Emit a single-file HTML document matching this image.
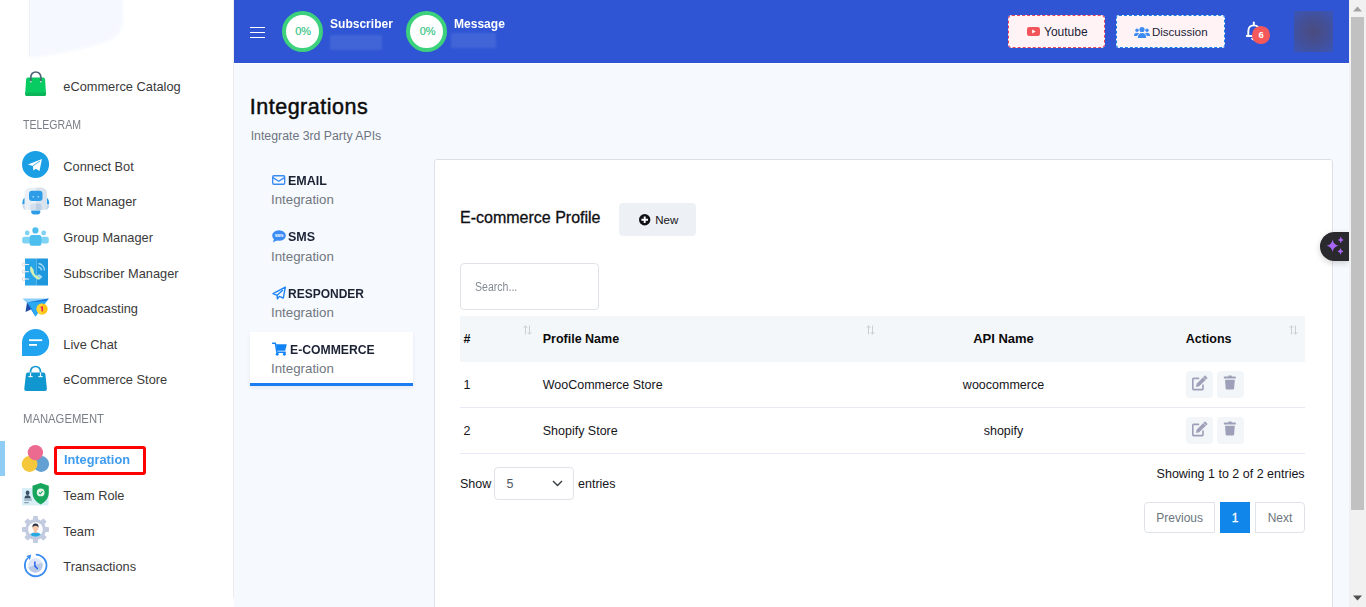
<!DOCTYPE html>
<html><head><meta charset="utf-8"><style>
html,body{margin:0;padding:0;width:1366px;height:607px;overflow:hidden;background:#fff;}
body{position:relative;font-family:"Liberation Sans",sans-serif;}
.a{position:absolute;}
.t{position:absolute;white-space:nowrap;}
svg.a{overflow:visible;}
</style></head><body>
<div class="a" style="left:0px;top:0px;width:233px;height:607px;background:#fff;"></div>
<div class="a" style="left:233px;top:0px;width:1px;height:598px;background:#ececec;"></div>
<svg class="a" style="left:0;top:0" width="140" height="70" viewBox="0 0 140 70"><defs><filter id="bl"><feGaussianBlur stdDeviation="1.6"/></filter></defs><path d="M29 -5 H123 V20 Q123 35 106 42 Q82 50 57 54 Q42 57 29 58 Z" fill="#f5f8fe" filter="url(#bl)"/></svg>
<div class="a" style="left:29px;top:0px;width:1px;height:56px;background:#efeff3;"></div>
<div class="t" style="left:63.3px;top:81.00px;font-size:12.8px;line-height:12.8px;color:#3a3a3a;font-weight:normal;">eCommerce Catalog</div>
<div class="t" style="left:63.3px;top:161.00px;font-size:12.8px;line-height:12.8px;color:#3a3a3a;font-weight:normal;">Connect Bot</div>
<div class="t" style="left:63.3px;top:196.00px;font-size:12.8px;line-height:12.8px;color:#3a3a3a;font-weight:normal;">Bot Manager</div>
<div class="t" style="left:63.3px;top:232.00px;font-size:12.8px;line-height:12.8px;color:#3a3a3a;font-weight:normal;">Group Manager</div>
<div class="t" style="left:63.3px;top:268.00px;font-size:12.8px;line-height:12.8px;color:#3a3a3a;font-weight:normal;">Subscriber Manager</div>
<div class="t" style="left:63.3px;top:303.00px;font-size:12.8px;line-height:12.8px;color:#3a3a3a;font-weight:normal;">Broadcasting</div>
<div class="t" style="left:63.3px;top:339.00px;font-size:12.8px;line-height:12.8px;color:#3a3a3a;font-weight:normal;">Live Chat</div>
<div class="t" style="left:63.3px;top:374.00px;font-size:12.8px;line-height:12.8px;color:#3a3a3a;font-weight:normal;">eCommerce Store</div>
<div class="t" style="left:63.3px;top:490.00px;font-size:12.8px;line-height:12.8px;color:#3a3a3a;font-weight:normal;">Team Role</div>
<div class="t" style="left:63.3px;top:526.00px;font-size:12.8px;line-height:12.8px;color:#3a3a3a;font-weight:normal;">Team</div>
<div class="t" style="left:63.3px;top:561.00px;font-size:12.8px;line-height:12.8px;color:#3a3a3a;font-weight:normal;">Transactions</div>
<div class="t" style="left:23px;top:119.00px;font-size:12.2px;line-height:12.2px;color:#7a7f87;font-weight:normal;transform:scaleX(0.865);transform-origin:0 0;">TELEGRAM</div>
<div class="t" style="left:23px;top:413.00px;font-size:12.7px;line-height:12.7px;color:#7a7f87;font-weight:normal;transform:scaleX(0.89);transform-origin:0 0;">MANAGEMENT</div>
<div class="a" style="left:0px;top:441px;width:5px;height:35px;background:#90cdf4;"></div>
<div class="t" style="left:63.5px;top:453.00px;font-size:13.6px;line-height:13.6px;color:#3d9bf0;font-weight:bold;transform:scaleX(0.94);transform-origin:0 0;">Integration</div>
<div class="a" style="left:54px;top:446px;width:92px;height:29px;box-sizing:border-box;border:3.8px solid #ff0000;border-radius:3px;"></div>
<svg class="a" style="left:22px;top:69px" width="28" height="28" viewBox="0 0 28 28">
<path d="M8.8 13 V8 A5 5 0 0 1 18.8 8 V13" fill="none" stroke="#4f6377" stroke-width="1.7"/>
<path d="M6 8.6 Q4.2 8.6 4.1 10.5 L3.2 24.5 Q3.1 27.1 5.5 27.1 H21.7 Q24.1 27.1 24 24.5 L23.1 10.5 Q23 8.6 21.2 8.6 Z" fill="#08cb62"/>
<path d="M3.4 23.5 H23.9 L24 24.5 Q24.1 27.1 21.7 27.1 H5.5 Q3.1 27.1 3.2 24.5 Z" fill="#0bb559"/>
<path d="M8.8 8.6 V13 M18.8 8.6 V13" stroke="#4f6377" stroke-width="1.7"/>
<rect x="8" y="12" width="1.6" height="1.4" fill="#b9e9c9"/><rect x="18" y="12" width="1.6" height="1.4" fill="#b9e9c9"/></svg>
<svg class="a" style="left:22px;top:151px" width="27" height="27" viewBox="0 0 27 27">
<circle cx="13.55" cy="13.4" r="13.5" fill="#1a9fe5"/>
<path d="M19.9 7.9 L5.9 13.6 L10.9 14.9 L11.4 19.6 L13.8 17.8 L17.5 20.1 Z" fill="#fff"/>
<path d="M10.9 14.9 L18 10" stroke="#1a9fe5" stroke-width="0.8"/></svg>
<svg class="a" style="left:22px;top:186.5px" width="28" height="28" viewBox="0 0 28 28">
<path d="M0.3 17 Q0.3 10.5 4 10.5 V17 Z" fill="#2d9be6"/><path d="M0.3 17 Q0.3 22.8 4 22.8 V17 Z" fill="#cddbe9"/>
<path d="M27.2 17 Q27.2 10.5 23.5 10.5 V17 Z" fill="#2d9be6"/><path d="M27.2 17 Q27.2 22.8 23.5 22.8 V17 Z" fill="#c4d4e6"/>
<path d="M13.8 0.5 H9 Q2.5 0.5 2.5 7 V19 Q2.5 23 6.5 23 H13.8 Z" fill="#eaf0f7"/>
<path d="M13.8 0.5 H18.5 Q25 0.5 25 7 V19 Q25 23 21 23 H13.8 Z" fill="#d8e3ee"/>
<rect x="7" y="3.8" width="13.5" height="10.2" rx="3" fill="#2e9de8"/>
<path d="M10.2 10.2 Q11.2 8.3 12.2 10.2 Z M15.3 10.2 Q16.3 8.3 17.3 10.2 Z" fill="#fff"/>
<path d="M13.8 16.5 H11 Q8 16.5 8 19.5 V23 H13.8 Z" fill="#d4e0ed"/><path d="M13.8 16.5 H16.5 Q19.5 16.5 19.5 19.5 V23 H13.8 Z" fill="#bccfe5"/>
<path d="M9.2 23.5 H18.3 V25 Q18.3 27.6 13.8 27.6 Q9.2 27.6 9.2 25Z" fill="#2e9de8"/></svg>
<svg class="a" style="left:22px;top:227px" width="27" height="20" viewBox="0 0 27 20">
<circle cx="5.2" cy="6" r="2.4" fill="#7fd3f2"/><circle cx="21.7" cy="6" r="2.4" fill="#7fd3f2"/>
<rect x="0.2" y="9.8" width="8" height="6.7" rx="2" fill="#7fd3f2"/><rect x="19" y="9.8" width="7.8" height="6.7" rx="2" fill="#7fd3f2"/>
<circle cx="13.4" cy="3.4" r="3.1" fill="#4cbfee"/>
<rect x="7.5" y="8.1" width="12" height="10.7" rx="2.5" fill="#4cbfee"/></svg>
<svg class="a" style="left:22px;top:257.5px" width="27" height="28" viewBox="0 0 27 28">
<rect x="3" y="0.5" width="11.6" height="27" fill="#29a4e9"/><rect x="14.6" y="0.5" width="11.4" height="27" fill="#1e97dd"/>
<g fill="none" stroke="#d3d9df" stroke-width="1"><circle cx="1.8" cy="6.4" r="1.5"/><circle cx="1.8" cy="13.7" r="1.5"/><circle cx="1.8" cy="21" r="1.5"/></g>
<g fill="#e3ecf3"><rect x="2.5" y="6" width="4.5" height="1"/><rect x="2.5" y="13.2" width="4.5" height="1"/><rect x="2.5" y="20.5" width="4.5" height="1"/></g>
<path d="M9.3 8.2 Q7 9.5 8.6 14 Q10.8 18.8 15 21.2 Q17.3 22.2 18.6 20.8 L15.2 17.5 Q13.6 17.9 12.6 16 Q11.4 13.9 11.8 12.3 Z" fill="#d4efb4"/>
<path d="M15.2 17.5 L18.6 20.8 Q20.8 19.5 19.8 18.2 Q18.5 16.8 16.8 16.2 Z" fill="#a6dbf8"/>
<path d="M16.5 5.5 A7 7 0 0 1 22.5 12.5 M16.2 8.8 A4 4 0 0 1 19.6 12.4" fill="none" stroke="#a6dbf8" stroke-width="1.3"/></svg>
<svg class="a" style="left:22px;top:297.5px" width="27" height="20" viewBox="0 0 27 20">
<path d="M0.5 0.6 L26.8 0.6 L5 5 Z" fill="#8cd0fb"/>
<path d="M5 4.6 L26.8 0.6 L13.5 18.8 Z" fill="#2ba8f2"/>
<path d="M5 4.6 L26.8 0.6 L24.5 3 Z" fill="#1a73d6"/>
<path d="M5 4.6 L3.5 14 L9.8 11 Z" fill="#1c4aa6"/>
<path d="M5 4.6 L9.8 11 L13.5 18.8 Z" fill="#1e8ae8"/>
<circle cx="20.1" cy="11" r="5.6" fill="#fbc417"/><path d="M20.1 5.4 A5.6 5.6 0 0 0 20.1 16.6Z" fill="#ffd437"/>
<rect x="19.4" y="8.6" width="1.6" height="4.8" fill="#e61f5a"/><rect x="18.6" y="8.6" width="1.6" height="1.2" fill="#e61f5a"/></svg>
<svg class="a" style="left:22px;top:329px" width="27" height="27" viewBox="0 0 27 27">
<path d="M13.6 0 A13.6 13.5 0 1 1 13.6 27 H0 V13.5 A13.6 13.5 0 0 1 13.6 0 Z" fill="#20a4ef"/>
<rect x="7" y="10.3" width="13.2" height="1.8" fill="#fff"/><rect x="7" y="15" width="8" height="1.8" fill="#fff"/></svg>
<svg class="a" style="left:22px;top:364px" width="28" height="28" viewBox="0 0 28 28">
<path d="M8.5 9 V7.5 A5 5 0 0 1 18.5 7.5 V9" fill="none" stroke="#1097cf" stroke-width="1.7"/>
<path d="M6 8.4 Q4.1 8.4 3.9 10.5 L2.3 24.4 Q2.1 26.9 4.6 26.9 H22.6 Q25.1 26.9 24.9 24.4 L23.4 10.5 Q23.2 8.4 21.3 8.4 Z" fill="#1097cf"/>
<g fill="#eaf5fb"><rect x="7.9" y="8.4" width="1.2" height="4"/><rect x="17.9" y="8.4" width="1.2" height="4"/><rect x="6.4" y="12" width="4.2" height="1.2"/><rect x="16.4" y="12" width="4.2" height="1.2"/></g></svg>
<svg class="a" style="left:21px;top:444px" width="29" height="29" viewBox="0 0 29 29">
<circle cx="20.2" cy="20" r="7.9" fill="#62a0d4"/><circle cx="8.6" cy="20" r="7.9" fill="#f5c73a"/><circle cx="14.4" cy="8.6" r="7.7" fill="#ec6a8f"/></svg>
<svg class="a" style="left:22px;top:483px" width="27" height="23" viewBox="0 0 27 23">
<rect x="0" y="5" width="26.5" height="17.5" rx="1" fill="#d9eff8"/>
<ellipse cx="5.6" cy="9.8" rx="1.9" ry="2.4" fill="#3d5266"/><path d="M2.4 15.6 Q2.6 12.3 5.6 12.3 Q8.6 12.3 8.8 15.6 Z" fill="#3d5266"/><rect x="2.2" y="15.6" width="7.6" height="2.4" fill="#aabdcc"/><rect x="2.2" y="19.3" width="4.5" height="0.9" fill="#6c7f92"/>
<path d="M18.7 0 L26.8 2.8 V10 Q26.8 17.2 18.7 21.5 Q10.5 17.2 10.5 10 V2.8 Z" fill="#17a65b"/>
<circle cx="18.7" cy="9.4" r="3.9" fill="#e6f6ec"/><path d="M16.9 9.5 L18.3 10.8 L20.6 8.2" fill="none" stroke="#17a65b" stroke-width="1.1"/></svg>
<svg class="a" style="left:22px;top:516px" width="27" height="27" viewBox="0 0 27 27">
<g fill="#c3cbe0"><circle cx="13.5" cy="13.5" r="10.5"/>
<rect x="11" y="0" width="5" height="27" rx="1"/><rect x="11" y="0" width="5" height="27" rx="1" transform="rotate(45 13.5 13.5)"/><rect x="11" y="0" width="5" height="27" rx="1" transform="rotate(90 13.5 13.5)"/><rect x="11" y="0" width="5" height="27" rx="1" transform="rotate(135 13.5 13.5)"/></g>
<circle cx="13.5" cy="13.5" r="7.3" fill="#fff"/>
<defs><clipPath id="tc"><circle cx="13.5" cy="13.5" r="7.3"/></clipPath></defs>
<g clip-path="url(#tc)"><path d="M7 22 Q7 16.5 13.5 16.5 Q20 16.5 20 22 Z" fill="#29a9e1"/><rect x="12.3" y="14" width="2.4" height="3" fill="#f2b89a"/>
<ellipse cx="13.5" cy="11.8" rx="2.9" ry="3.3" fill="#f6c7a8"/><path d="M10.4 11.5 Q10.2 7.5 13.5 7.6 Q16.8 7.5 16.6 11.5 Q15.5 9.6 13.5 9.8 Q11.5 9.6 10.4 11.5Z" fill="#2c3345"/></g></svg>
<svg class="a" style="left:22px;top:552px" width="27" height="27" viewBox="0 0 27 27">
<path d="M13.8 2.6 A10.8 10.8 0 1 1 5.8 6.0" fill="none" stroke="#3a8cf2" stroke-width="1.8"/>
<path d="M9.2 2.6 L4.4 3.9 L8.0 8.0 Z" fill="#3a8cf2"/>
<defs><clipPath id="trc"><circle cx="13.4" cy="13.4" r="7.3"/></clipPath></defs>
<circle cx="13.4" cy="13.4" r="7.3" fill="#dfe6f7"/>
<path d="M0 17.5 L27 8.5 V27 H0 Z" fill="#b9c9e6" clip-path="url(#trc)"/>
<path d="M12.9 10 V14.1 L15.3 16.6" fill="none" stroke="#2563eb" stroke-width="1.5" stroke-linecap="round"/></svg>
<div class="a" style="left:234px;top:0px;width:1115px;height:63px;background:#2f55d4;"></div>
<div class="a" style="left:234px;top:63px;width:1115px;height:1px;background:#ffffff;"></div>
<div class="a" style="left:250px;top:26.5px;width:15px;height:1.6px;background:#fff;"></div>
<div class="a" style="left:250px;top:31.5px;width:15px;height:1.6px;background:#fff;"></div>
<div class="a" style="left:250px;top:36.5px;width:15px;height:1.6px;background:#fff;"></div>
<div class="a" style="left:281.5px;top:10.8px;width:41px;height:41px;box-sizing:border-box;border:4px solid #3dd17e;border-radius:50%;background:#fff;"></div>
<div class="t" style="left:153.2px;width:300px;text-align:center;top:26.00px;font-size:11px;line-height:11px;color:#2ec27e;font-weight:normal;-webkit-text-stroke:0.15px #2ec27e;">0%</div>
<div class="a" style="left:406.0px;top:10.8px;width:41px;height:41px;box-sizing:border-box;border:4px solid #3dd17e;border-radius:50%;background:#fff;"></div>
<div class="t" style="left:277.7px;width:300px;text-align:center;top:26.00px;font-size:11px;line-height:11px;color:#2ec27e;font-weight:normal;-webkit-text-stroke:0.15px #2ec27e;">0%</div>
<div class="t" style="left:329.8px;top:17.00px;font-size:13.3px;line-height:13.3px;color:#fff;font-weight:bold;transform:scaleX(0.905);transform-origin:0 0;">Subscriber</div>
<div class="t" style="left:453.8px;top:17.00px;font-size:13.3px;line-height:13.3px;color:#fff;font-weight:bold;transform:scaleX(0.905);transform-origin:0 0;">Message</div>
<div class="a" style="left:330px;top:35px;width:52px;height:15px;background:rgba(255,255,255,0.09);filter:blur(1px);"></div>
<div class="a" style="left:451px;top:33px;width:45px;height:15px;background:rgba(255,255,255,0.09);filter:blur(1px);"></div>
<div class="a" style="left:1008px;top:15px;width:97px;height:33px;border-radius:4px;background:#fff;"><div style="position:absolute;left:0;top:0;width:97px;height:33px;box-sizing:border-box;border:1.5px dashed #e8465a;border-radius:4px;background:#fff3f6;background-clip:padding-box;"></div></div>
<svg class="a" style="left:1026.7px;top:27px" width="13" height="9" viewBox="0 0 13 9"><rect width="13" height="9" rx="2.3" fill="#f2545b"/><path d="M5.2 2.5 L8.6 4.5 L5.2 6.5Z" fill="#fff"/></svg>
<div class="t" style="left:1044px;top:26.00px;font-size:12px;line-height:12px;color:#1b2234;font-weight:normal;">Youtube</div>
<div class="a" style="left:1116px;top:15px;width:109px;height:33px;border-radius:3px;background:#fff;"><div style="position:absolute;left:0;top:0;width:109px;height:33px;box-sizing:border-box;border:1.5px dashed #1a80e8;border-radius:3px;background:#fff3f6;background-clip:padding-box;"></div></div>
<svg class="a" style="left:1133.5px;top:25.5px" width="16" height="12" viewBox="0 0 16 12"><circle cx="8" cy="3.5" r="2.6" fill="#3b8bf2"/><circle cx="3" cy="4.3" r="1.7" fill="#3b8bf2"/><circle cx="13" cy="4.3" r="1.7" fill="#3b8bf2"/>
<path d="M3.8 12 Q3.8 7 8 7 Q12.2 7 12.2 12Z" fill="#3b8bf2"/><path d="M0 10 Q0 6.8 3 6.8 Q4.5 6.8 5 7.5 Q3.3 8.5 3.2 10Z" fill="#3b8bf2"/><path d="M16 10 Q16 6.8 13 6.8 Q11.5 6.8 11 7.5 Q12.7 8.5 12.8 10Z" fill="#3b8bf2"/></svg>
<div class="t" style="left:1152px;top:27.00px;font-size:11.5px;line-height:11.5px;color:#1b2234;font-weight:normal;">Discussion</div>
<svg class="a" style="left:1244px;top:21px" width="18" height="20" viewBox="0 0 18 20"><path d="M9.8 1.6 V3.8" stroke="#fff" stroke-width="2" stroke-linecap="round"/><path d="M4.3 14.4 V10.2 Q4.3 4.4 9.8 4.4 Q15.3 4.4 15.3 10.2 V14.4 L16.8 15 H2.8 Z" fill="none" stroke="#fff" stroke-width="1.9" stroke-linejoin="round"/><path d="M7.6 17.2 Q9.8 19.8 12 17.2" fill="none" stroke="#fff" stroke-width="1.8"/></svg>
<div class="a" style="left:1252.2px;top:26px;width:17.6px;height:17.6px;border-radius:50%;background:#f4585a;"></div>
<div class="t" style="left:1111.2px;width:300px;text-align:center;top:30.00px;font-size:9.5px;line-height:9.5px;color:#fff;font-weight:bold;">6</div>
<div class="a" style="left:1294px;top:11px;width:39px;height:41px;background:radial-gradient(circle at 50% 50%, #4a4c7e 0%, #454f92 40%, #3b55b6 100%);"></div>
<div class="a" style="left:234px;top:64px;width:1115px;height:543px;background:#f6f9fe;"></div>
<div class="t" style="left:249.8px;top:97.00px;font-size:21.5px;line-height:21.5px;color:#0b0b0b;font-weight:normal;-webkit-text-stroke:0.45px #0b0b0b;letter-spacing:0.5px;">Integrations</div>
<div class="t" style="left:250.7px;top:130.00px;font-size:12.3px;line-height:12.3px;color:#6e7580;font-weight:normal;">Integrate 3rd Party APIs</div>
<div class="a" style="left:250px;top:332px;width:163px;height:54px;background:#fff;box-shadow:0 2px 4px rgba(20,40,80,0.07);"></div>
<div class="a" style="left:250px;top:383.4px;width:163px;height:2.4px;background:#1a7cf0;"></div>
<div class="t" style="left:288.4px;top:174.00px;font-size:13.3px;line-height:13.3px;color:#1b2234;font-weight:bold;transform:scaleX(0.94);transform-origin:0 0;">EMAIL</div>
<div class="t" style="left:271px;top:193.00px;font-size:13.3px;line-height:13.3px;color:#72777f;font-weight:normal;">Integration</div>
<div class="t" style="left:288.4px;top:230.00px;font-size:13.3px;line-height:13.3px;color:#1b2234;font-weight:bold;transform:scaleX(0.94);transform-origin:0 0;">SMS</div>
<div class="t" style="left:271px;top:250.00px;font-size:13.3px;line-height:13.3px;color:#72777f;font-weight:normal;">Integration</div>
<div class="t" style="left:288.1px;top:287.00px;font-size:13.3px;line-height:13.3px;color:#1b2234;font-weight:bold;transform:scaleX(0.902);transform-origin:0 0;">RESPONDER</div>
<div class="t" style="left:271px;top:306.00px;font-size:13.3px;line-height:13.3px;color:#72777f;font-weight:normal;">Integration</div>
<div class="t" style="left:289.7px;top:343.00px;font-size:13.3px;line-height:13.3px;color:#1b2234;font-weight:bold;transform:scaleX(0.917);transform-origin:0 0;">E-COMMERCE</div>
<div class="t" style="left:271px;top:362.00px;font-size:13.3px;line-height:13.3px;color:#72777f;font-weight:normal;">Integration</div>
<svg class="a" style="left:271.8px;top:174.9px" width="13.4" height="10" viewBox="0 0 13.4 10"><rect x=".7" y=".7" width="12" height="8.6" rx="1.2" fill="none" stroke="#3b8bf5" stroke-width="1.35"/><path d="M1 2.6 L6.7 6.2 L12.4 2.6" fill="none" stroke="#3b8bf5" stroke-width="1.35"/></svg>
<svg class="a" style="left:271.5px;top:229.5px" width="14" height="13" viewBox="0 0 14 13"><ellipse cx="7" cy="5.5" rx="6.8" ry="5.3" fill="#3b8bf5"/><path d="M2 8.5 L1 12.5 L5.5 10Z" fill="#3b8bf5"/><text x="7" y="7.1" font-size="4" font-family="Liberation Sans" font-weight="bold" fill="#fff" text-anchor="middle">SMS</text></svg>
<svg class="a" style="left:271.5px;top:286px" width="15" height="15" viewBox="0 0 15 15"><path d="M13.3 1.1 L1 7.6 L5.1 9.3 L5.4 12.9 L7.4 10.4 L11.3 12.1 Z" fill="none" stroke="#1a82f7" stroke-width="1.35" stroke-linejoin="round"/><path d="M5.1 9.3 L11 4" stroke="#1a82f7" stroke-width="1.35"/></svg>
<svg class="a" style="left:272px;top:342px" width="16" height="15" viewBox="0 0 16 15"><path d="M0.6 1.3 H3.4 L4.8 10.2 H13.3" fill="none" stroke="#1283f5" stroke-width="1.4" stroke-linecap="round" stroke-linejoin="round"/><path d="M4 2.2 H14.8 L13.2 8.8 H4.9 Z" fill="#1283f5"/><circle cx="5.2" cy="12.2" r="1.45" fill="#1283f5"/><circle cx="12.4" cy="12.2" r="1.45" fill="#1283f5"/></svg>
<div class="a" style="left:434px;top:159px;width:899px;height:460px;box-sizing:border-box;border:1px solid #dde1e7;border-radius:3px;background:#fff;"></div>
<div class="t" style="left:460px;top:210.00px;font-size:16px;line-height:16px;color:#0f0f14;font-weight:normal;-webkit-text-stroke:0.3px #0f0f14;">E-commerce Profile</div>
<div class="a" style="left:619px;top:203px;width:77px;height:32.5px;border-radius:4px;background:#edf0f4;"></div>
<svg class="a" style="left:638.6px;top:213.6px" width="11.4" height="11.4" viewBox="0 0 11.4 11.4"><circle cx="5.7" cy="5.7" r="5.7" fill="#111116"/><path d="M5.7 2.4 V9 M2.4 5.7 H9" stroke="#fff" stroke-width="1.9"/></svg>
<div class="t" style="left:655.3px;top:215.00px;font-size:11.5px;line-height:11.5px;color:#15151a;font-weight:normal;">New</div>
<div class="a" style="left:460px;top:263px;width:139px;height:47px;box-sizing:border-box;border:1px solid #dfe3e8;border-radius:4px;background:#fff;"></div>
<div class="t" style="left:474.6px;top:281.00px;font-size:12px;line-height:12px;color:#858b94;font-weight:normal;transform:scaleX(0.88);transform-origin:0 0;">Search...</div>
<div class="a" style="left:460px;top:316px;width:845px;height:45.5px;background:#f4f7fa;"></div>
<div class="a" style="left:460px;top:407px;width:845px;height:1px;background:#e7e9f6;"></div>
<div class="a" style="left:460px;top:453px;width:845px;height:1px;background:#e7e9f6;"></div>
<div class="t" style="left:463.5px;top:333.00px;font-size:12.5px;line-height:12.5px;color:#0b0b0b;font-weight:bold;">#</div>
<div class="t" style="left:542.7px;top:333.00px;font-size:12.5px;line-height:12.5px;color:#0b0b0b;font-weight:bold;">Profile Name</div>
<div class="t" style="left:853.5px;width:300px;text-align:center;top:332.00px;font-size:13px;line-height:13px;color:#0b0b0b;font-weight:bold;">API Name</div>
<div class="t" style="left:1185.7px;top:333.00px;font-size:12.5px;line-height:12.5px;color:#0b0b0b;font-weight:bold;">Actions</div>
<svg class="a" style="left:523px;top:325px" width="9" height="10" viewBox="0 0 9 10"><path d="M2.5 9.5 V.8 M.6 2.8 L2.5 .8 L4.4 2.8 M6.5 .5 V9.2 M4.6 7.2 L6.5 9.2 L8.4 7.2" fill="none" stroke="#c5c9d0" stroke-width=".9"/></svg>
<svg class="a" style="left:866px;top:325px" width="9" height="10" viewBox="0 0 9 10"><path d="M2.5 9.5 V.8 M.6 2.8 L2.5 .8 L4.4 2.8 M6.5 .5 V9.2 M4.6 7.2 L6.5 9.2 L8.4 7.2" fill="none" stroke="#c5c9d0" stroke-width=".9"/></svg>
<svg class="a" style="left:1289px;top:325px" width="9" height="10" viewBox="0 0 9 10"><path d="M2.5 9.5 V.8 M.6 2.8 L2.5 .8 L4.4 2.8 M6.5 .5 V9.2 M4.6 7.2 L6.5 9.2 L8.4 7.2" fill="none" stroke="#c5c9d0" stroke-width=".9"/></svg>
<div class="t" style="left:463.5px;top:379.00px;font-size:12.5px;line-height:12.5px;color:#15151a;font-weight:normal;">1</div>
<div class="t" style="left:542.7px;top:379.00px;font-size:12.5px;line-height:12.5px;color:#15151a;font-weight:normal;">WooCommerce Store</div>
<div class="t" style="left:853.5px;width:300px;text-align:center;top:379.00px;font-size:12.5px;line-height:12.5px;color:#15151a;font-weight:normal;">woocommerce</div>
<div class="a" style="left:1186.3px;top:371.3px;width:26.5px;height:26.5px;border-radius:4px;background:#f3f6f9;"></div>
<div class="a" style="left:1217.2px;top:371.3px;width:26.5px;height:26.5px;border-radius:4px;background:#f3f6f9;"></div>
<svg class="a" style="left:1186.3px;top:371.3px" width="26.5" height="26.5" viewBox="0 0 26.5 26.5"><path d="M13.2 7.4 H7.6 Q6.8 7.4 6.8 8.2 V17.8 Q6.8 18.6 7.6 18.6 H16.2 Q17 18.6 17 17.8 V13.4" fill="none" stroke="#9da0b8" stroke-width="1.6"/><path d="M10 15.9 L10.6 12.7 L19 4.3 L21.6 6.9 L13.2 15.3 Z" fill="#9da0b8"/><path d="M17.3 6 L19.9 8.6" stroke="#f3f6f9" stroke-width="0.6"/></svg>
<svg class="a" style="left:1217.2px;top:371.3px" width="26.5" height="26.5" viewBox="0 0 26.5 26.5"><rect x="6.8" y="5.6" width="12" height="1.9" rx="0.5" fill="#9da0b8"/><rect x="11.3" y="4.6" width="3.5" height="1.5" rx="0.5" fill="#9da0b8"/><path d="M8 8.7 H17.8 L17.1 17.6 Q17 18.6 16 18.6 H9.8 Q8.8 18.6 8.7 17.6 Z" fill="#9da0b8"/></svg>
<div class="t" style="left:463.5px;top:425.00px;font-size:12.5px;line-height:12.5px;color:#15151a;font-weight:normal;">2</div>
<div class="t" style="left:542.7px;top:425.00px;font-size:12.5px;line-height:12.5px;color:#15151a;font-weight:normal;">Shopify Store</div>
<div class="t" style="left:853.5px;width:300px;text-align:center;top:425.00px;font-size:12.5px;line-height:12.5px;color:#15151a;font-weight:normal;">shopify</div>
<div class="a" style="left:1186.3px;top:417.3px;width:26.5px;height:26.5px;border-radius:4px;background:#f3f6f9;"></div>
<div class="a" style="left:1217.2px;top:417.3px;width:26.5px;height:26.5px;border-radius:4px;background:#f3f6f9;"></div>
<svg class="a" style="left:1186.3px;top:417.3px" width="26.5" height="26.5" viewBox="0 0 26.5 26.5"><path d="M13.2 7.4 H7.6 Q6.8 7.4 6.8 8.2 V17.8 Q6.8 18.6 7.6 18.6 H16.2 Q17 18.6 17 17.8 V13.4" fill="none" stroke="#9da0b8" stroke-width="1.6"/><path d="M10 15.9 L10.6 12.7 L19 4.3 L21.6 6.9 L13.2 15.3 Z" fill="#9da0b8"/><path d="M17.3 6 L19.9 8.6" stroke="#f3f6f9" stroke-width="0.6"/></svg>
<svg class="a" style="left:1217.2px;top:417.3px" width="26.5" height="26.5" viewBox="0 0 26.5 26.5"><rect x="6.8" y="5.6" width="12" height="1.9" rx="0.5" fill="#9da0b8"/><rect x="11.3" y="4.6" width="3.5" height="1.5" rx="0.5" fill="#9da0b8"/><path d="M8 8.7 H17.8 L17.1 17.6 Q17 18.6 16 18.6 H9.8 Q8.8 18.6 8.7 17.6 Z" fill="#9da0b8"/></svg>
<div class="t" style="left:460px;top:478.00px;font-size:12.5px;line-height:12.5px;color:#15151a;font-weight:normal;">Show</div>
<div class="a" style="left:493.5px;top:467px;width:80px;height:32.5px;box-sizing:border-box;border:1px solid #dfe3e8;border-radius:4px;background:#fff;"></div>
<div class="t" style="left:506.4px;top:478.00px;font-size:12.5px;line-height:12.5px;color:#50565f;font-weight:normal;">5</div>
<svg class="a" style="left:551.5px;top:480px" width="11" height="7" viewBox="0 0 11 7"><path d="M1 1 L5.5 5.5 L10 1" fill="none" stroke="#343a40" stroke-width="1.35"/></svg>
<div class="t" style="left:578px;top:478.00px;font-size:12.5px;line-height:12.5px;color:#15151a;font-weight:normal;">entries</div>
<div class="t" style="right:61.40000000000009px;top:468.00px;font-size:12.5px;line-height:12.5px;color:#15151a;font-weight:normal;">Showing 1 to 2 of 2 entries</div>
<div class="a" style="left:1144.3px;top:502px;width:70.7px;height:30.5px;box-sizing:border-box;border:1px solid #dfe3e8;border-radius:4px 0 0 4px;background:#fff;"></div>
<div class="t" style="left:1029.7px;width:300px;text-align:center;top:512.00px;font-size:12px;line-height:12px;color:#6c757d;font-weight:normal;">Previous</div>
<div class="a" style="left:1220px;top:502px;width:30px;height:30.5px;background:#1086eb;"></div>
<div class="t" style="left:1085.0px;width:300px;text-align:center;top:512.00px;font-size:12px;line-height:12px;color:#fff;font-weight:normal;-webkit-text-stroke:0.3px #fff;">1</div>
<div class="a" style="left:1255px;top:502px;width:50px;height:30.5px;box-sizing:border-box;border:1px solid #dfe3e8;border-radius:0 4px 4px 0;background:#fff;"></div>
<div class="t" style="left:1130.0px;width:300px;text-align:center;top:512.00px;font-size:12px;line-height:12px;color:#6c757d;font-weight:normal;">Next</div>
<div class="a" style="left:1320px;top:231.5px;width:29px;height:29px;border-radius:14.5px 0 0 14.5px;background:#2a2a2e;box-shadow:0 2px 6px rgba(0,0,0,0.18);"></div>
<svg class="a" style="left:1324px;top:235px" width="22" height="22" viewBox="0 0 22 22">
<path d="M8.6 4.5 Q9.5 9.8 14.6 10.8 Q9.5 11.8 8.6 17 Q7.7 11.8 2.6 10.8 Q7.7 9.8 8.6 4.5Z" fill="#a866f5"/>
<path d="M16.8 1.6 Q17.2 4.5 19.8 5 Q17.2 5.5 16.8 8.4 Q16.4 5.5 13.8 5 Q16.4 4.5 16.8 1.6Z" fill="#a866f5"/>
<path d="M16.5 13 Q16.9 15.9 19.5 16.4 Q16.9 16.9 16.5 19.8 Q16.1 16.9 13.5 16.4 Q16.1 15.9 16.5 13Z" fill="#a866f5"/></svg>
<div class="a" style="left:1349px;top:0px;width:17px;height:607px;background:#f1f1f1;"></div>
<div class="a" style="left:1351px;top:17px;width:13px;height:493px;background:#c1c1c1;"></div>
<svg class="a" style="left:1353px;top:6px" width="9" height="6" viewBox="0 0 9 6"><path d="M0 5.5 L4.5 0.5 L9 5.5Z" fill="#a3a3a3"/></svg>
<svg class="a" style="left:1353px;top:595px" width="9" height="6" viewBox="0 0 9 6"><path d="M0 .5 L4.5 5.5 L9 .5Z" fill="#505050"/></svg>
</body></html>
